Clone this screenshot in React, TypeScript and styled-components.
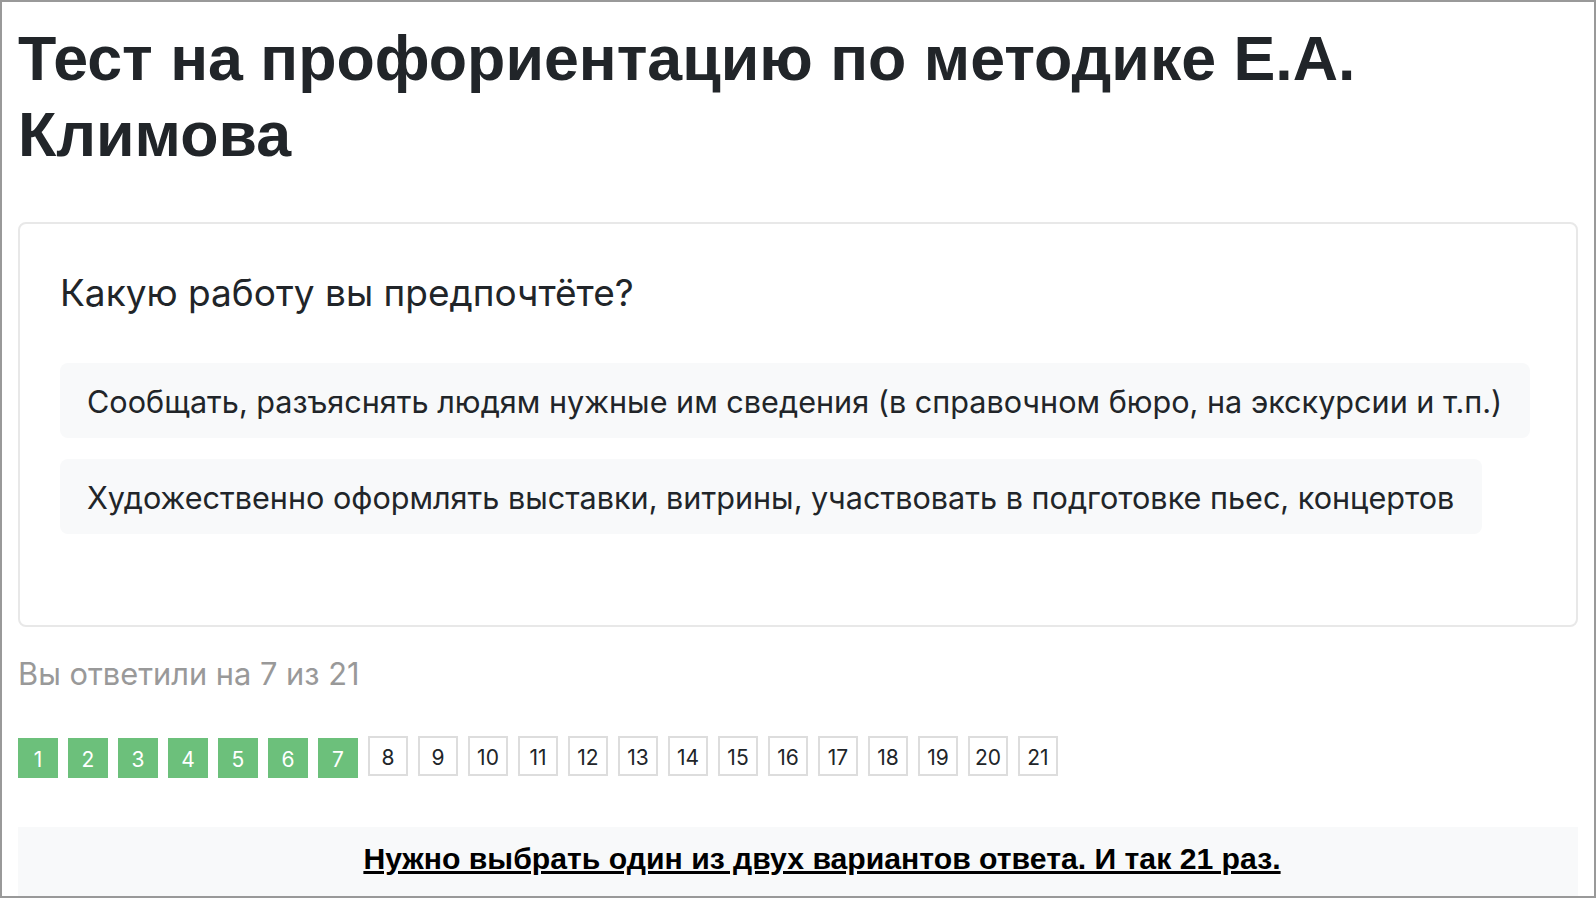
import styled, { createGlobalStyle } from 'styled-components';

const GlobalStyle = createGlobalStyle`
  html, body {
    margin: 0;
    padding: 0;
    background: #ffffff;
  }
  body {
    font-family: Inter, 'Liberation Sans', Arial, sans-serif;
    color: #212529;
  }
`;

const options = [
  'Сообщать, разъяснять людям нужные им сведения (в справочном бюро, на экскурсии и т.п.)',
  'Художественно оформлять выставки, витрины, участвовать в подготовке пьес, концертов',
];

const TOTAL = 21;
const ANSWERED = 7;

export default function App() {
  const pages = Array.from({ length: TOTAL }, (_, i) => i + 1);

  return (
    <>
      <GlobalStyle />
      <Frame>
        <Page>
          <Title>Тест на профориентацию по методике Е.А. Климова</Title>
          <Card>
            <Question>Какую работу вы предпочтёте?</Question>
            <Options>
              {options.map((text) => (
                <Option key={text}>{text}</Option>
              ))}
            </Options>
          </Card>
          <Progress>
            Вы ответили на {ANSWERED} из {TOTAL}
          </Progress>
          <Pager>
            {pages.map((n) => (
              <PageBox key={n} $done={n <= ANSWERED}>
                {n}
              </PageBox>
            ))}
          </Pager>
          <Hint>
            <HintLink href="#">
              Нужно выбрать один из двух вариантов ответа. И так 21 раз.
            </HintLink>
          </Hint>
        </Page>
      </Frame>
    </>
  );
}

const Frame = styled.div`
  height: 898px;
  box-sizing: border-box;
  border: 2px solid #999999;
  overflow: hidden;
`;

const Page = styled.div`
  padding: 0 16px;
`;

const Title = styled.h1`
  margin: 19px 0 50px;
  font-family: 'Liberation Sans', Arial, sans-serif;
  font-size: 62.7px;
  line-height: 75.6px;
  font-weight: 700;
  color: #212529;
`;

const Card = styled.div`
  border: 2px solid #e8e8e8;
  border-radius: 8px;
  padding: 47px 40px 91px;
`;

const Question = styled.h3`
  margin: 0 0 49px;
  font-size: 37px;
  line-height: 43px;
  font-weight: 400;
  color: #212529;
`;

const Options = styled.div`
  display: flex;
  flex-direction: column;
  align-items: flex-start;
  gap: 21px;
`;

const Option = styled.div`
  background: #f8f9fa;
  border-radius: 8px;
  padding: 16px 28px 14px 27px;
  font-size: 30.6px;
  line-height: 45px;
  color: #212529;
  cursor: pointer;
`;

const Progress = styled.p`
  margin: 24px 0 40px;
  font-size: 30.8px;
  line-height: 45px;
  color: #999999;
`;

const Pager = styled.div`
  display: flex;
  align-items: flex-start;
  gap: 10px;
`;

const PageBox = styled.div<{ $done: boolean }>`
  width: 40px;
  height: 40px;
  box-sizing: border-box;
  display: flex;
  align-items: center;
  justify-content: center;
  padding-top: 2px;
  font-size: 21px;
  margin-top: ${(p) => (p.$done ? '2px' : '0')};
  background: ${(p) => (p.$done ? '#6cc07b' : '#ffffff')};
  color: ${(p) => (p.$done ? '#ffffff' : '#212529')};
  border: ${(p) => (p.$done ? 'none' : '2px solid #dddddd')};
`;

const Hint = styled.div`
  margin-top: 49px;
  background: #f8f9fa;
  padding: 9px 0 24px 48px;
  text-align: center;
`;

const HintLink = styled.a`
  font-family: 'Liberation Sans', Arial, sans-serif;
  font-size: 30.2px;
  line-height: 45px;
  font-weight: 700;
  color: #000000;
  text-decoration: underline;
`;
